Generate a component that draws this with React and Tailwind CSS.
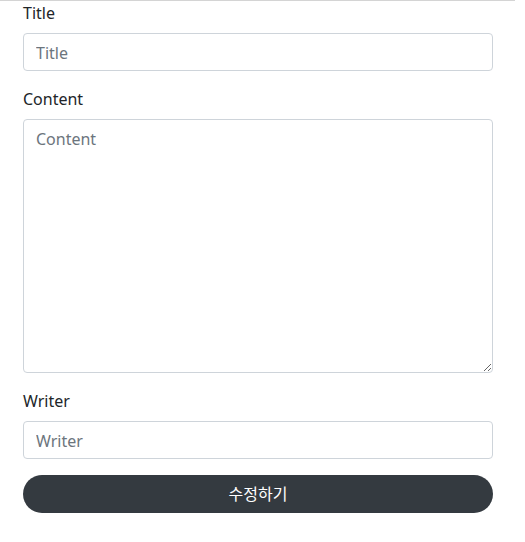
import React from 'react';

export default function App() {
  const font = { fontFamily: '"Noto Sans", "Noto Sans CJK KR", sans-serif' };
  const input =
    'block w-full h-[38px] px-3 pt-[2px] border border-[#ced4da] rounded-[4px] text-base text-[#495057] placeholder:text-[#6c757d] outline-none';
  return (
    <div className="min-h-screen bg-white text-[#212529]" style={font}>
      <div className="w-[515px] border-t border-[#d4d4d4]" />
      <form className="w-[470px] ml-[23px]" onSubmit={(e) => e.preventDefault()}>
        <div className="mb-4">
          <label className="block mb-2 text-base leading-6">Title</label>
          <input className={input} placeholder="Title" />
        </div>
        <div className="mb-4">
          <label className="block mb-2 text-base leading-6">Content</label>
          <textarea
            rows={10}
            className="block w-full h-[254px] px-3 pt-[7px] pb-[5px] border border-[#ced4da] rounded-[4px] text-base leading-6 text-[#495057] placeholder:text-[#6c757d] outline-none"
            placeholder="Content"
          />
        </div>
        <div className="mb-4">
          <label className="block mb-2 text-base leading-6">Writer</label>
          <input className={input} placeholder="Writer" />
        </div>
        <button
          type="submit"
          className="block w-full h-[38px] rounded-full bg-[#343a40] text-white text-base leading-6"
        >
          수정하기
        </button>
      </form>
    </div>
  );
}
